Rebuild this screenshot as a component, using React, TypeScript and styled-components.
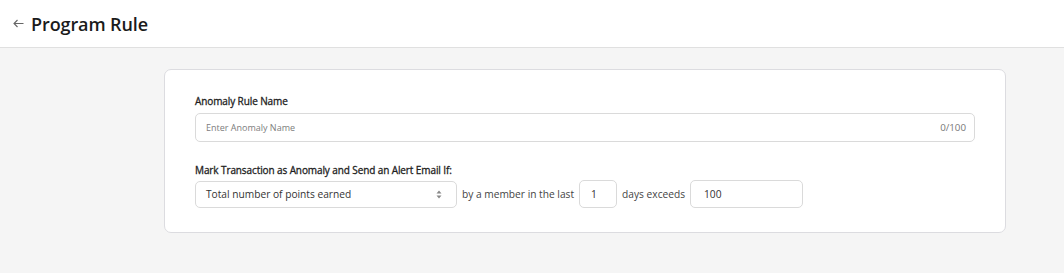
import React from "react";
import styled, { createGlobalStyle } from "styled-components";

const GlobalStyle = createGlobalStyle`
  html, body { margin: 0; padding: 0; background: #f5f5f5; }
  body { font-family: "Open Sans", "Noto Sans", sans-serif; color: #333; }
  * { box-sizing: border-box; }
`;

const Header = styled.header`
  height: 48px;
  background: #fff;
  border-bottom: 1px solid #e0e0e0;
  display: flex;
  align-items: center;
  padding-left: 12px;
  gap: 7px;
`;

const BackButton = styled.button`
  border: 0;
  background: none;
  padding: 0;
  width: 12px;
  height: 12px;
  display: flex;
  align-items: center;
  justify-content: center;
  color: #666;
  cursor: pointer;
`;

const Title = styled.h1`
  margin: 0;
  font-size: 18px;
  font-weight: 600;
  color: #1b1b1b;
  letter-spacing: -0.1px;
`;

const Main = styled.main`
  padding: 21px 0 0 164px;
`;

const Card = styled.section`
  width: 842px;
  background: #fff;
  border: 1px solid #dcdce0;
  border-radius: 7px;
  padding: 23px 30px 24px 30px;
  display: flex;
  flex-direction: column;
`;

const Label = styled.label<{ $gap?: number }>`
  font-size: 10px;
  line-height: 16px;
  font-weight: 400;
  color: #1e1e1e;
  letter-spacing: -0.1px;
  -webkit-text-stroke: 0.3px #1e1e1e;
  margin-top: ${(p) => p.$gap ?? 0}px;
  margin-bottom: 4px;
`;

const InputBox = styled.div`
  height: 29px;
  border: 1px solid #dadada;
  border-radius: 5px;
  display: flex;
  align-items: center;
  padding: 0 8px 0 10px;
`;

const TextInput = styled.input`
  flex: 1;
  border: 0;
  outline: none;
  font-family: inherit;
  font-size: 9px;
  color: #333;
  padding: 0;
  background: transparent;
  &::placeholder { color: #7d7d7d; }
`;

const Counter = styled.span`
  font-size: 9.75px;
  color: #777;
`;

const Row = styled.div`
  display: flex;
  align-items: center;
  gap: 5px;
  margin-top: -2px;
`;

const Select = styled.div`
  width: 262px;
  height: 27px;
  border: 1px solid #dadada;
  border-radius: 5px;
  display: flex;
  align-items: center;
  justify-content: space-between;
  padding: 0 14px 0 10px;
  font-size: 10.2px;
  color: #333;
`;

const Inline = styled.span`
  font-size: 10.2px;
  color: #444;
  white-space: nowrap;
`;

const SmallField = styled.div<{ $w: number; $pad: number }>`
  width: ${(p) => p.$w}px;
  height: 28px;
  border: 1px solid #dadada;
  border-radius: 5px;
  display: flex;
  align-items: center;
  padding-left: ${(p) => p.$pad}px;
  font-size: 10.2px;
  color: #333;
`;

export default function App() {
  return (
    <>
      <GlobalStyle />
      <Header>
        <BackButton aria-label="Back">
          <svg width="11" height="9" viewBox="0 0 11 9" fill="none">
            <path d="M10.5 4.5H1M4.5 1L1 4.5L4.5 8" stroke="#666" strokeWidth="1.1" />
          </svg>
        </BackButton>
        <Title>Program Rule</Title>
      </Header>
      <Main>
        <Card>
          <Label>Anomaly Rule Name</Label>
          <InputBox>
            <TextInput placeholder="Enter Anomaly Name" />
            <Counter>0/100</Counter>
          </InputBox>
          <Label $gap={20}>Mark Transaction as Anomaly and Send an Alert Email If:</Label>
          <Row>
            <Select>
              <span>Total number of points earned</span>
              <svg width="6" height="9" viewBox="0 0 6 9">
                <path d="M3 0.5L5.5 3.5H0.5Z M3 8.5L0.5 5.5H5.5Z" fill="#888" />
              </svg>
            </Select>
            <Inline>by a member in the last</Inline>
            <SmallField $w={38} $pad={11}>1</SmallField>
            <Inline>days exceeds</Inline>
            <SmallField $w={113} $pad={13}>100</SmallField>
          </Row>
        </Card>
      </Main>
    </>
  );
}
